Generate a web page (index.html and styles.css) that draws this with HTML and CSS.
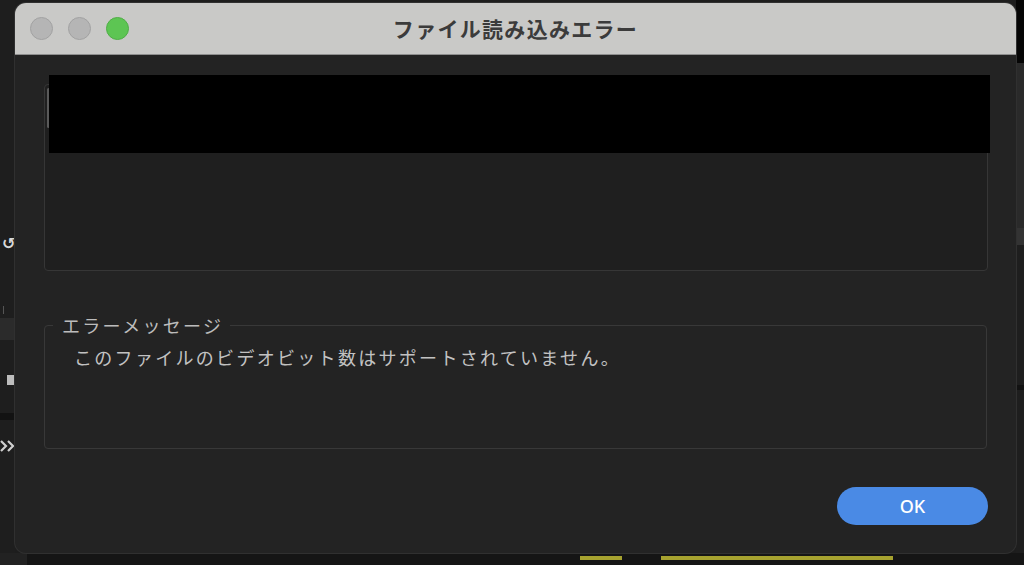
FILE: index.html
```html
<!DOCTYPE html>
<html lang="ja">
<head>
<meta charset="utf-8">
<title>ファイル読み込みエラー</title>
<link rel="stylesheet" href="styles.css">
</head>
<body>
<div class="desktop">
  <div class="bg-left">
    <span class="bg-glyph bg-undo">↺</span>
    <span class="bg-tick"></span>
    <span class="bg-band"></span>
    <span class="bg-square"></span>
    <span class="bg-dark"></span>
    <svg class="bg-chev" width="15" height="14" viewBox="0 0 15 14"><path d="M1 2l5 5-5 5M8 2l5 5-5 5" fill="none" stroke="#cfcfcf" stroke-width="2.2"/></svg>
  </div>
  <div class="bg-right">
    <span class="r1"></span><span class="r2"></span><span class="r3"></span><span class="r4"></span>
  </div>
  <div class="bg-bottom">
    <span class="bar bar1"></span>
    <span class="bar bar2"></span>
  </div>

  <div class="window">
    <div class="titlebar">
      <div class="lights">
        <span class="light gray"></span>
        <span class="light gray"></span>
        <span class="light green"></span>
      </div>
      <div class="title">ファイル読み込みエラー</div>
    </div>
    <div class="content">
      <div class="filebox">
        <span class="thumb"></span>
        <span class="redact"></span>
      </div>
      <fieldset class="msg">
        <legend>エラーメッセージ</legend>
        <p>このファイルのビデオビット数はサポートされていません。</p>
      </fieldset>
      <div class="actions">
        <button class="ok">OK</button>
      </div>
    </div>
  </div>
</div>
</body>
</html>
```

FILE: styles.css
```css
* { box-sizing: border-box; }
html, body {
  margin: 0;
  padding: 0;
  background: #1c1c1c;
  font-family: "Noto Sans CJK JP", "Noto Sans", sans-serif;
}
.desktop {
  position: relative;
  width: 1024px;
  height: 565px;
  overflow: hidden;
  background: #1d1d1d;
  padding: 3px 0 0 15px;
}

/* background application fragments */
.bg-left {
  position: absolute;
  left: 0; top: 0;
  width: 15px; height: 565px;
  background: #1e1e1e;
}
.bg-glyph {
  position: absolute;
  color: #d8d8d8;
  font-family: "DejaVu Sans", sans-serif;
  line-height: 1;
}
.bg-undo { left: 2px; top: 236px; font-size: 16px; font-weight: bold; }
.bg-chev { position: absolute; left: 0; top: 439px; }
.bg-tick { position: absolute; left: 3px; top: 306px; width: 1px; height: 8px; background: #555; }
.bg-band { position: absolute; left: 0; top: 318px; width: 15px; height: 22px; background: #2b2b2b; }
.bg-square { position: absolute; left: 7px; top: 375px; width: 8px; height: 10px; background: #bdbdbd; }
.bg-dark { position: absolute; left: 0; top: 413px; width: 15px; height: 7px; background: #121212; }

.bg-right {
  position: absolute;
  right: 0; top: 0;
  width: 8px; height: 565px;
  background: #1e1e1e;
}
.bg-right span { position: absolute; left: 0; width: 8px; display: block; }
.bg-right .r1 { top: 0; height: 63px; background: #050505; }
.bg-right .r2 { top: 63px; height: 165px; background: #2a2a2a; }
.bg-right .r3 { top: 228px; height: 17px; background: #333; }
.bg-right .r4 { top: 385px; height: 5px; background: #121212; }

.bg-bottom {
  position: absolute;
  left: 0; top: 553px;
  width: 1024px; height: 12px;
  background: #151515;
  border-left: 27px solid #222;
}
.bar {
  position: absolute;
  top: 3px;
  height: 4px;
  background: #a6a22f;
}
.bar1 { left: 553px; width: 42px; }
.bar2 { left: 634px; width: 232px; }

/* window */
.window {
  position: relative;
  width: 1001px;
  height: 550px;
  border-radius: 11px;
  overflow: hidden;
  background: #232323;
  box-shadow: 0 0 0 1px #303030;
  display: flex;
  flex-direction: column;
}
.titlebar {
  position: relative;
  height: 52px;
  flex: none;
  background: #c9c9c7;
  border-bottom: 1px solid #8e8e8e;
  display: flex;
  align-items: center;
  justify-content: center;
}
.lights {
  position: absolute;
  left: 15px;
  top: 14px;
  display: flex;
  gap: 15px;
}
.light {
  width: 23px;
  height: 23px;
  border-radius: 50%;
  display: block;
}
.light.gray { background: #b5b5b5; border: 1px solid #a2a2a2; }
.light.green { background: #5dc553; border: 1px solid #4fae46; }
.title {
  font-size: 21px;
  font-weight: bold;
  color: #3b3b3b;
  letter-spacing: 1.3px;
  margin-top: -2px;
}

.content {
  flex: 1;
  padding: 29px 28px 28px 29px;
  display: flex;
  flex-direction: column;
}
.filebox {
  position: relative;
  height: 187px;
  background: #1f1f1f;
  border: 1px solid #363636;
  border-radius: 4px;
  flex: none;
}
.thumb {
  position: absolute;
  left: 2px; top: 3px;
  width: 3px; height: 40px;
  border-radius: 2px;
  background: #5a5a5a;
}
.redact {
  position: absolute;
  left: 4px; top: -10px;
  width: 941px; height: 78px;
  background: #000;
}

.msg {
  margin: 42px 1px 0 0;
  padding: 0;
  height: 136px;
  border: 1px solid #383838;
  border-radius: 4px;
  flex: none;
}
.msg legend {
  margin-left: 8px;
  padding: 0 7px 0 9px;
  font-size: 18px;
  line-height: 24px;
  color: #bcbcbc;
  letter-spacing: 2.3px;
}
.msg p {
  margin: 0;
  padding: 8px 0 0 29px;
  font-size: 18px;
  line-height: 24px;
  color: #c2c2c2;
  letter-spacing: 2.3px;
}

.actions {
  margin-top: auto;
  display: flex;
  justify-content: flex-end;
}
.ok {
  width: 151px;
  height: 38px;
  border: none;
  border-radius: 19px;
  background: #4a8ae5;
  color: #ffffff;
  font-family: "Noto Sans", "Noto Sans CJK JP", sans-serif;
  font-size: 18px;
  font-weight: 500;
  padding: 0;
}
```
